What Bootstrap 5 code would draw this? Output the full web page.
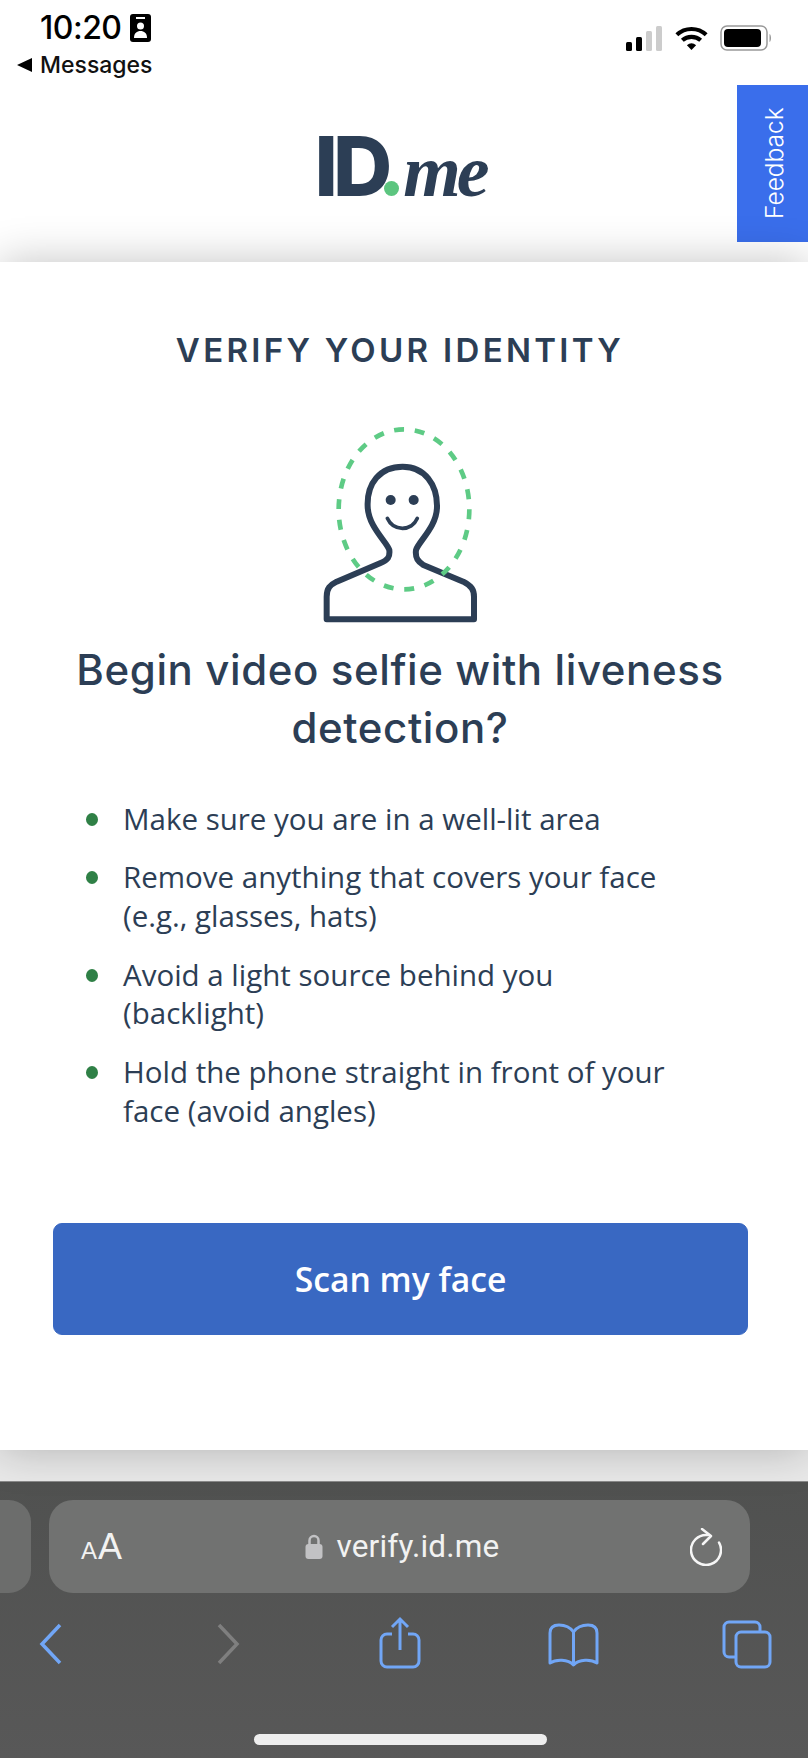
<!DOCTYPE html>
<html lang="en">
<head>
    <meta charset="UTF-8">
    <meta name="viewport" content="width=device-width, initial-scale=1.0">
    <title>ID.me - Verify your identity</title>
    <link href="https://cdn.jsdelivr.net/npm/bootstrap@5.3.0/dist/css/bootstrap.min.css" rel="stylesheet">
    <style>
        html, body { height: 1758px; overflow: hidden; }
        body { background: #fff; font-family: "Open Sans", sans-serif; color: #2c3e55; }
        .phone { width: 808px; height: 1758px; }

        .status-bar { height: 85px; padding: 9px 36px 0 17px; }
        .clock { font: 500 32px/38px Inter, sans-serif; color: #000; margin-left: 23px; letter-spacing: -.5px; }
        .back-app { font: 500 23px/28px Inter, sans-serif; color: #111; margin-top: 4px; }
        .back-arrow { width: 0; height: 0; border-top: 7px solid transparent; border-bottom: 7px solid transparent; border-right: 15px solid #000; margin-right: 8px; }
        .status-icons { margin-top: 16px; gap: 12.5px; }

        .site-header { height: 177px; }
        .feedback-tab { top: 0; right: 0; width: 71px; height: 157px; background: #3a6eeb; color: #fff; font: 300 24.5px/1 Inter, sans-serif; writing-mode: vertical-rl; transform: rotate(180deg); padding-right: 3px; }
        .id-logo { height: 60px; color: #2c3e55; line-height: 60px; white-space: nowrap; margin-top: 52px; margin-left: -8px; }
        .id-caps { font: 800 82px/60px Inter, sans-serif; letter-spacing: -5px; }
        .id-dot { display: inline-block; width: 15px; height: 15px; border-radius: 50%; background: #5cc57f; margin: 0 4px 0 -3px; }
        .id-me { font: italic 700 74px/60px "Liberation Serif", serif; letter-spacing: -4px; }

        .verify-card { height: 1188px; border-radius: 0; border: 0; box-shadow: 0 0 42px rgba(0, 0, 0, .24); padding: 68px 61px 0 53px; }
        .verify-title { font: 600 33px/40px Inter, sans-serif; letter-spacing: 3.3px; text-align: center; margin: 0 0 40px; }
        .face-art { display: block; width: 220px; height: 220px; margin: 0 0 9px 237px; }
        .verify-heading { font: 500 42px/58px Inter, sans-serif; letter-spacing: .6px; text-align: center; margin: 2px -30px 43px; }
        .tips { margin: 0 0 0 33px; padding: 0; list-style: none; font-size: 29.5px; line-height: 38.8px; width: 640px; }
        .tips li { margin-bottom: 19.6px; }
        .tip-dot { flex: 0 0 12px; width: 12px; height: 13px; border-radius: 50%; background: #2f8046; margin: 13px 25px 0 0; }
        .scan-btn { height: 112px; width: 695px; margin-top: 73px; background: #3968c2; border-color: #3968c2; border-radius: 9px; font-size: 33.7px; font-weight: 600; color: #fff; }

        .below-card { height: 31px; background: #e9e9e9; }
        .safari-bar { height: 277px; background: linear-gradient(#505150, #585858); padding-top: 18px; border-top: 1px solid #8a8a8a; }
        .tab-stub { width: 31px; height: 93px; background: #6c6d6c; border-radius: 0 22px 22px 0; }
        .url-pill { width: 701px; height: 93px; margin-left: 18px; background: #717271; border-radius: 24px; padding: 0 28px 0 32px; color: #f2f2f2; }
        .text-size { width: 34px; font: 400 36px/1 "Liberation Sans", sans-serif; white-space: nowrap; }
        .text-size small { font-size: 24px; margin-right: 1px; }
        .url-wrap { gap: 13px; }
        .url-text { font: 400 31.5px/1 Roboto, sans-serif; letter-spacing: .2px; }
        .tool-row { padding: 20px 32px 0 20px; }
        .home-line { width: 293px; height: 11px; background: #eee; border-radius: 6px; margin: 61px 0 0 254px; }
    </style>
</head>
<body>
<div class="phone d-flex flex-column">
    <div class="status-bar d-flex justify-content-between">
        <div>
            <div class="d-flex align-items-center">
                <span class="clock">10:20</span>
                <svg class="ms-2" width="21" height="28" viewBox="0 0 21 28"><rect x="0" y="0" width="21" height="28" rx="3" fill="#000"/><rect x="6" y="3" width="9" height="2" fill="#fff"/><circle cx="10.500" cy="12" r="3.500" fill="#fff"/><path d="M4 24c0-5 3-7 6.500-7s6.500 2 6.500 7z" fill="#fff"/></svg>
            </div>
            <div class="back-app d-flex align-items-center"><span class="back-arrow"></span>Messages</div>
        </div>
        <div class="status-icons d-flex">
            <svg width="36" height="26" viewBox="0 0 36 26"><rect x="0" y="17" width="6" height="9" rx="1.500" fill="#000"/><rect x="10" y="12" width="6" height="14" rx="1.500" fill="#000"/><rect x="20" y="6" width="6" height="20" rx="1.500" fill="#ccc"/><rect x="30" y="1" width="6" height="25" rx="1.500" fill="#ccc"/></svg>
            <svg width="33" height="26" viewBox="0 0 36 26"><path d="M2 9.500C11 1 25 1 34 9.500" fill="none" stroke="#000" stroke-width="4.500"/><path d="M8 15.500C13.500 10.500 22.500 10.500 28 15.500" fill="none" stroke="#000" stroke-width="4.500"/><path d="M13 21C16 18 20 18 23 21L18 26Z" fill="#000"/></svg>
            <svg width="52" height="26" viewBox="0 0 52 26"><rect x="1" y="1" width="46" height="24" rx="6" fill="none" stroke="#999" stroke-width="1.500"/><rect x="4" y="4" width="37" height="18" rx="4" fill="#000"/><path d="M49.500 9c2 1 2 7 0 8z" fill="#999"/></svg>
        </div>
    </div>

    <header class="site-header position-relative d-flex justify-content-center">
        <div class="id-logo"><span class="id-caps">ID</span><span class="id-dot"></span><span class="id-me">me</span></div>
        <div class="feedback-tab position-absolute d-flex align-items-center justify-content-center">Feedback</div>
    </header>

    <main class="verify-card card bg-white position-relative">
        <h1 class="verify-title">VERIFY YOUR IDENTITY</h1>
        <svg class="face-art" viewBox="0 0 660 660">
            <path d="M110 628V560C110 535 120 525 140 515L270 460C295 450 300 440 298 420C290 395 235 350 233 290C230 220 270 170 338 170C405 170 442 225 441 290C441 350 385 395 378 420C375 445 385 455 400 465L520 515C545 528 552 540 552 560V628Z" fill="none" stroke="#2c3e55" stroke-width="18" stroke-linejoin="round"/>
            <circle cx="302" cy="270" r="15" fill="#2c3e55"/>
            <circle cx="371" cy="270" r="15" fill="#2c3e55"/>
            <path d="M292 325C310 365 365 365 382 325" fill="none" stroke="#2c3e55" stroke-width="11" stroke-linecap="round"/>
            <ellipse cx="342" cy="298" rx="196" ry="240" fill="none" stroke="#5ecb85" stroke-width="14" stroke-dasharray="30 32.400"/>
        </svg>
        <h2 class="verify-heading">Begin video selfie with liveness<br>detection?</h2>
        <ul class="tips">
            <li class="d-flex"><span class="tip-dot"></span><span>Make sure you are in a well-lit area</span></li>
            <li class="d-flex"><span class="tip-dot"></span><span>Remove anything that covers your face<br>(e.g., glasses, hats)</span></li>
            <li class="d-flex"><span class="tip-dot"></span><span>Avoid a light source behind you<br>(backlight)</span></li>
            <li class="d-flex"><span class="tip-dot"></span><span>Hold the phone straight in front of your<br>face (avoid angles)</span></li>
        </ul>
        <button type="button" class="btn btn-primary scan-btn">Scan my face</button>
    </main>
    <div class="below-card"></div>

    <div class="safari-bar">
        <div class="d-flex">
            <div class="tab-stub"></div>
            <div class="url-pill d-flex align-items-center justify-content-between">
                <span class="text-size"><small>A</small>A</span>
                <span class="url-wrap d-flex align-items-center">
                    <svg width="18" height="25" viewBox="0 0 18 25"><path d="M4.500 11V6.500a4.500 4.500 0 0 1 9 0V11" fill="none" stroke="#c2c2c4" stroke-width="2.500"/><rect x="0.500" y="10" width="17" height="15" rx="3" fill="#c2c2c4"/></svg>
                    <span class="url-text">verify.id.me</span>
                </span>
                <svg width="32" height="38" viewBox="0 0 32 38"><path d="M18 7.100A15 15 0 1 0 29 14.500" fill="none" stroke="#f6f6f6" stroke-width="2.500" stroke-linecap="round"/><path d="M12 1L21 8L13 16" fill="none" stroke="#f6f6f6" stroke-width="2.500" stroke-linecap="round" stroke-linejoin="round"/></svg>
            </div>
        </div>
        <div class="tool-row d-flex justify-content-between">
            <svg width="60" height="60" viewBox="0 0 60 60"><path d="M40 12L22 31L40 50" fill="none" stroke="#71a6f6" stroke-width="3.500"/></svg>
            <svg width="60" height="60" viewBox="0 0 60 60"><path d="M25 12L43 31L25 50" fill="none" stroke="#7f7f7f" stroke-width="3.500"/></svg>
            <svg width="60" height="60" viewBox="0 0 60 60"><path d="M24 21H19a6 6 0 0 0-6 6V48a6 6 0 0 0 6 6H45a6 6 0 0 0 6-6V27a6 6 0 0 0-6-6H40M32 37V6M24 14L32 6L40 14" fill="none" stroke="#71a6f6" stroke-width="3"/></svg>
            <svg width="60" height="60" viewBox="0 0 60 60"><path d="M31.500 19C28 14 22 12 17 12C11 12 8 15 8 20V50C14 46 26 46 31.500 52C37 46 49 46 55 50V20C55 15 52 12 46 12C41 12 35 14 31.500 19ZM31.500 19V50" fill="none" stroke="#71a6f6" stroke-width="3" stroke-linejoin="round"/></svg>
            <svg width="60" height="60" viewBox="0 0 60 60"><rect x="20" y="19" width="34" height="35" rx="5" fill="none" stroke="#71a6f6" stroke-width="3"/><path d="M20 44H13a5 5 0 0 1-5-5V14a5 5 0 0 1 5-5H39a5 5 0 0 1 5 5V19" fill="none" stroke="#71a6f6" stroke-width="3"/></svg>
        </div>
        <div class="home-line"></div>
    </div>
</div>
<script src="https://cdn.jsdelivr.net/npm/bootstrap@5.3.0/dist/js/bootstrap.bundle.min.js"></script>
</body>
</html>
